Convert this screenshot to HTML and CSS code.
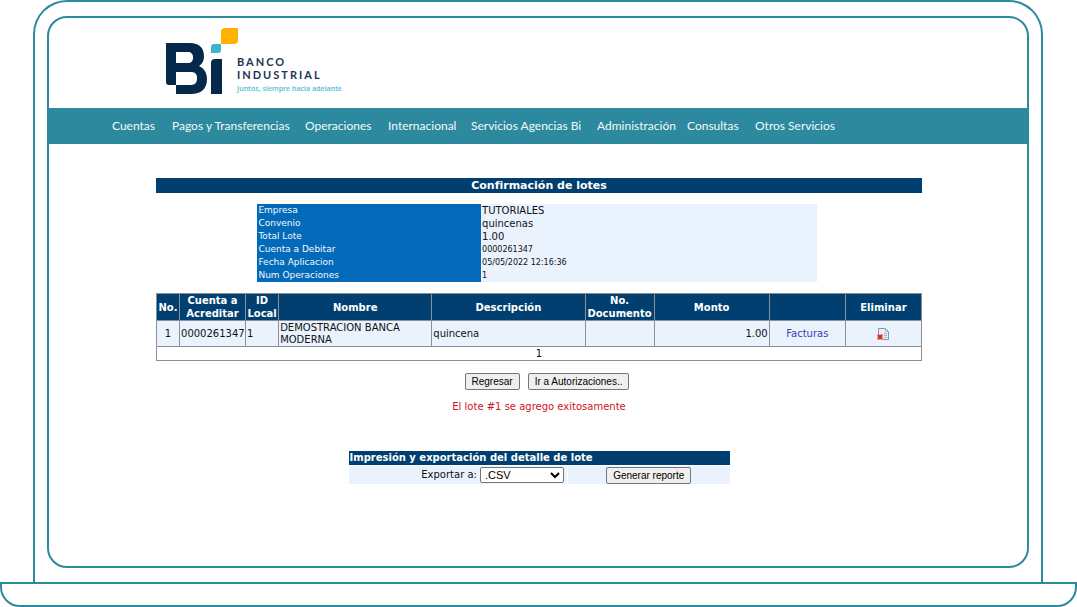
FILE: index.html
```html
<!DOCTYPE html>
<html lang="es">
<head>
<meta charset="utf-8">
<meta name="viewport" content="width=device-width, initial-scale=1">
<title>Banco Industrial - Confirmación de lotes</title>
<link rel="stylesheet" href="styles.css">
</head>
<body>
<div class="lid">
  <div class="screen">
    <header class="brand">
      <svg class="brand-mark" viewBox="165 27 74 66" aria-hidden="true">
        <path fill="#ffb000" d="M225 27h13v12q0 4-4 4h-13V31q0-4 4-4z"/>
        <path fill="#3db5cc" d="M214 43h7v6q0 3-3 3h-7v-6q0-3 3-3z"/>
        <path fill="#04294b" d="M215 58h7v35h-11V62q0-4 4-4z"/>
        <path fill="#04294b" fill-rule="evenodd" d="M166 42h24c9 0 14 5 14 13 0 5-2 8-5 10 5 2 8 7 8 13 0 10-6 15-16 15h-15V84h-7q-3 0-3-3zM176 51v11h12c3 0 5-2 5-5v-1c0-3-2-5-5-5zM176 71v13h15c4 0 6-3 6-6v-1c0-4-2-6-6-6z"/>
      </svg>
      <div class="brand-text">
        <span class="brand-name">BANCO</span>
        <span class="brand-name">INDUSTRIAL</span>
        <span class="brand-tagline">Juntos, siempre hacia adelante</span>
      </div>
    </header>
    <nav class="menu">
      <a href="#">Cuentas</a>
      <a href="#">Pagos y Transferencias</a>
      <a href="#">Operaciones</a>
      <a href="#">Internacional</a>
      <a href="#">Servicios Agencias Bi</a>
      <a href="#">Administración</a>
      <a href="#">Consultas</a>
      <a href="#">Otros Servicios</a>
    </nav>
    <main class="content">
      <h1 class="title">Confirmación de lotes</h1>
      <table class="summary">
        <tr><th scope="row">Empresa</th><td>TUTORIALES</td></tr>
        <tr><th scope="row">Convenio</th><td>quincenas</td></tr>
        <tr><th scope="row">Total Lote</th><td>1.00</td></tr>
        <tr><th scope="row">Cuenta a Debitar</th><td class="small">0000261347</td></tr>
        <tr><th scope="row">Fecha Aplicacion</th><td class="small">05/05/2022 12:16:36</td></tr>
        <tr><th scope="row">Num Operaciones</th><td class="small">1</td></tr>
      </table>
      <table class="lots">
        <colgroup>
          <col class="c-no"><col class="c-account"><col class="c-id"><col class="c-wide"><col class="c-wide"><col class="c-doc"><col class="c-amount"><col class="c-action"><col class="c-action">
        </colgroup>
        <thead>
          <tr><th>No.</th><th>Cuenta a Acreditar</th><th>ID Local</th><th>Nombre</th><th>Descripción</th><th>No. Documento</th><th>Monto</th><th></th><th>Eliminar</th></tr>
        </thead>
        <tbody>
          <tr>
            <td class="center">1</td><td>0000261347</td><td>1</td><td>DEMOSTRACION BANCA MODERNA</td><td>quincena</td><td></td><td class="right">1.00</td>
            <td class="center"><a class="link" href="#">Facturas</a></td>
            <td class="center">
              <button class="delete" type="button" aria-label="Eliminar">
                <svg width="12" height="12" viewBox="0 0 12 12" aria-hidden="true">
                  <path d="M1.500.5h7L11.500 3.500v8h-10z" fill="#e6edf6" stroke="#8798ac"/>
                  <path d="M8.500.5v3h3M7 5.500h3M7 7.500h3M7 9.500h3" fill="none" stroke="#a3b5cb"/>
                  <path d="M0 6h6v6H0z" fill="#f3b5aa"/>
                  <path d="M1 7l4 4M5 7l-4 4" stroke="#d32c20" stroke-width="2"/>
                </svg>
              </button>
            </td>
          </tr>
        </tbody>
        <tfoot><tr><td class="center" colspan="9">1</td></tr></tfoot>
      </table>
      <div class="actions">
        <button class="btn" type="button">Regresar</button>
        <button class="btn" type="button">Ir a Autorizaciones..</button>
      </div>
      <p class="message">El lote #1 se agrego exitosamente</p>
      <form class="export">
        <h2 class="export-title">Impresión y exportación del detalle de lote</h2>
        <div class="export-row">
          <div class="export-format">
            <label for="format">Exportar a:</label>
            <select id="format"><option>.CSV</option></select>
          </div>
          <div class="export-run"><button class="btn" type="button">Generar reporte</button></div>
        </div>
      </form>
    </main>
  </div>
</div>
<div class="base"></div>
</body>
</html>
```
FILE: styles.css
```css
* { box-sizing: border-box; }

body {
  display: flex;
  flex-direction: column;
  min-height: 100vh;
  margin: 0;
  background: #fff;
  color: #111;
  font-family: "DejaVu Sans", Verdana, sans-serif;
  font-size: 10px;
  line-height: 12px;
}

/* Laptop frame */
.lid {
  display: flex;
  flex: 1;
  margin: 0 34px 0 33px;
  padding: 14px 12px;
  border: 2px solid #2d899c;
  border-bottom: 0;
  border-radius: 34px 34px 0 0;
}
.screen {
  flex: 1;
  min-width: 0;
  border: 2px solid #2d899c;
  border-radius: 20px;
  overflow: hidden;
}
.base {
  height: 25px;
  border: 2px solid #2d899c;
  border-radius: 0 0 20px 20px;
}

/* Header */
.brand {
  display: flex;
  align-items: flex-end;
  height: 90px;
  padding: 0 116px 14px;
}
.brand-mark { width: 74px; height: 66px; }
.brand-text {
  display: flex;
  flex-direction: column;
  margin-left: -2px;
  font-family: Lato, sans-serif;
  white-space: nowrap;
}
.brand-name {
  color: #1b3554;
  font-size: 11px;
  font-weight: 700;
  line-height: 13px;
  letter-spacing: 2px;
}
.brand-tagline {
  padding-top: 3px;
  color: #5bc3d6;
  font-family: "Noto Sans", sans-serif;
  font-size: 7px;
  font-weight: 600;
  line-height: 10px;
}

.menu {
  display: grid;
  grid-template-columns: 60px 133px 83px 83px 126px 90px 68px auto;
  align-items: center;
  height: 36px;
  padding: 0 63px;
  background: #2d899e;
  font-family: Lato, sans-serif;
  font-size: 12px;
}
.menu a { color: #f2fafb; text-decoration: none; white-space: nowrap; }

/* Page content */
.content {
  display: flex;
  flex-direction: column;
  align-items: center;
  max-width: 768px;
  margin: 0 auto;
  padding: 34px 0 16px 2px;
}
.title {
  align-self: stretch;
  margin: 0 0 11px;
  background: #003f70;
  color: #fff;
  font-size: 11px;
  line-height: 15px;
  text-align: center;
}
table { border-collapse: collapse; table-layout: fixed; }

.summary { width: 73%; margin: 0 4px 11px 0; }
.summary th,
.summary td { height: 13px; padding: 0 1px; line-height: 13px; text-align: left; }
.summary th {
  width: 40%;
  background: #0369b9;
  color: #f4f9ff;
  font-size: 9px;
  font-weight: 400;
}
.summary td { background: #eaf2fe; }
.summary .small { font-size: 8px; }

.lots { width: 100%; margin-bottom: 12px; }
.lots th,
.lots td { height: 14px; padding: 0 1px; border: 1px solid #8b9097; text-align: left; }
.lots th {
  padding: 0;
  background: #003f70;
  color: #fff;
  font-size: 10px;
  line-height: 13px;
  text-align: center;
}
.lots tbody td { height: 26px; background: #eaf2fe; }
.lots .center { text-align: center; }
.lots .right { text-align: right; }
.c-no { width: 23px; }
.c-account { width: 66px; }
.c-id { width: 33px; }
.c-wide { width: 153px; }
.c-doc { width: 69px; }
.c-amount { width: 115px; }
.c-action { width: 76px; }
.link { color: #3c3cb4; text-decoration: none; }
.delete { padding: 4px 0 0; border: 0; background: none; }
.delete svg { display: block; }

.btn,
select {
  height: 17px;
  padding: 0 6px;
  border: 1px solid #767676;
  border-radius: 2px;
  background: #efefef;
  color: #000;
  font-family: "Liberation Sans", Arial, sans-serif;
  font-size: 10px;
}
.actions { display: flex; gap: 8px; padding-left: 16px; }
.message { margin: 11px 0 38px; color: #cf1322; }

.export { width: 381px; max-width: 100%; }
.export-title {
  margin: 0 0 1px;
  padding-left: 1px;
  background: #003f70;
  color: #fff;
  font-size: 10px;
  line-height: 14px;
}
.export-row { display: flex; gap: 1px; }
.export-format,
.export-run {
  display: flex;
  align-items: center;
  gap: 3px;
  height: 18px;
  background: #eaf2fe;
}
.export-format { flex: 4; justify-content: flex-end; padding-right: 3px; }
.export-run { flex: 3; justify-content: center; }
select { width: 84px; height: 16px; padding: 0; background: #fff; font-size: 11px; }
```
